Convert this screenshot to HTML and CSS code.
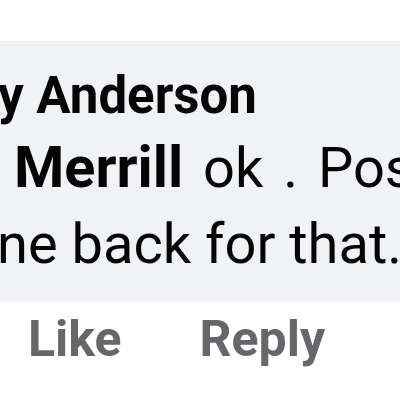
FILE: index.html
```html
<!DOCTYPE html>
<html>
<head>
<meta charset="utf-8">
<link rel="stylesheet" href="styles.css">
</head>
<body>
<div class="comment">
  <div class="bubble">
    <div class="author author-shift">y Anderson</div>
    <div class="line line-one"><span class="mention">Merrill</span> ok . Possibly</div>
    <div class="line line-two">ne back for that.</div>
  </div>
  <div class="actions">
    <span class="action">Like</span>
    <span class="action">Reply</span>
  </div>
</div>
</body>
</html>
```
FILE: styles.css
```css
html, body {
  margin: 0;
  padding: 0;
  background: #ffffff;
  overflow: hidden;
  width: 400px;
  height: 400px;
}
.comment {
  font-family: Roboto, "Noto Sans", sans-serif;
  padding-top: 41px;
}
.bubble {
  background: #f0f2f5;
  padding: 25px 0 20px 0;
  height: 216px;
  color: #050505;
}
.author {
  font-size: 51px;
  font-weight: 700;
  line-height: 60px;
  white-space: nowrap;
  margin-bottom: 4px;
}
.author-shift {
  margin-left: -2px;
}
.line {
  font-size: 56px;
  line-height: 76px;
  white-space: nowrap;
}
.mention {
  font-size: 57.5px;
  font-weight: 700;
}
.line-one {
  margin-left: 14px;
  word-spacing: 6px;
}
.line-two {
  margin-left: -3px;
}
.actions {
  display: flex;
  gap: 78px;
  margin-top: 7px;
  padding-left: 28px;
  font-size: 50px;
  font-weight: 700;
  line-height: 60px;
  color: #65676b;
}
```
